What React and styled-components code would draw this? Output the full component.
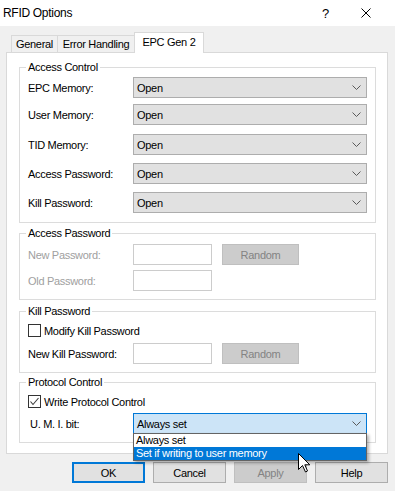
import React from "react";
import styled, { createGlobalStyle } from "styled-components";

const GlobalStyle = createGlobalStyle`
  html, body {
    margin: 0;
    padding: 0;
    background: #f0f0f0;
  }
  * {
    box-sizing: border-box;
  }
`;

const Window = styled.div`
  position: relative;
  width: 395px;
  height: 491px;
  overflow: hidden;
  background: #f0f0f0;
  font-family: "Liberation Sans", Arial, sans-serif;
  font-size: 11px;
  letter-spacing: -0.3px;
  color: #000;
  display: flex;
  flex-direction: column;
`;

const TitleBar = styled.div`
  height: 26px;
  flex-shrink: 0;
  background: #fff;
  display: flex;
  align-items: center;
  padding-left: 3px;
`;

const Title = styled.span`
  flex: 1;
  font-size: 12px;
`;

const HelpGlyph = styled.span`
  font-size: 13px;
  width: 10px;
  margin-right: 29px;
`;

const CloseBtn = styled.span`
  display: flex;
  margin-right: 24px;
`;

const TabStrip = styled.div`
  display: flex;
  align-items: flex-end;
  height: 20px;
  margin-top: 6px;
  padding-left: 11px;
`;

const Tab = styled.div`
  position: relative;
  width: ${p => p.$w}px;
  height: ${p => (p.$active ? 21 : 17)}px;
  margin-left: -1px;
  margin-bottom: ${p => (p.$active ? -1 : 0)}px;
  z-index: ${p => (p.$active ? 2 : 1)};
  background: ${p => (p.$active ? "#fff" : "#f0f0f0")};
  border: 1px solid #d9d9d9;
  border-bottom: none;
  display: flex;
  align-items: center;
  justify-content: center;
  padding-bottom: ${p => (p.$active ? 2 : 0)}px;
  &:first-child {
    margin-left: 0;
  }
`;

const Panel = styled.div`
  margin-left: 6px;
  width: 382px;
  height: 402px;
  background: #fff;
  border: 1px solid #d9d9d9;
  padding: 0 11px 0 12px;
  display: flex;
  flex-direction: column;
`;

const Group = styled.div`
  position: relative;
  height: ${p => p.$h}px;
  margin-top: ${p => p.$mt}px;
  border: 1px solid #dcdcdc;
  padding-left: 8px;
  flex-shrink: 0;
`;

const Legend = styled.span`
  position: absolute;
  top: -8px;
  left: 6px;
  line-height: 14px;
  padding: 0 2px;
  background: #fff;
`;

const Row = styled.div`
  display: flex;
  align-items: center;
  margin-top: ${p => p.$mt}px;
`;

const Label = styled.span`
  width: 105px;
  flex-shrink: 0;
  color: ${p => (p.$disabled ? "#a0a0a0" : "#000")};
`;

const Combo = styled.div`
  position: relative;
  width: 234px;
  height: 21px;
  border: 1px solid ${p => (p.$focused ? "#0078d7" : "#adadad")};
  background: ${p => (p.$focused ? "#cce4f7" : "#e1e1e1")};
  display: flex;
  align-items: center;
  justify-content: space-between;
  padding: 0 5px 0 3px;
`;

const DropList = styled.div`
  position: absolute;
  top: 19px;
  left: -1px;
  width: 234px;
  border: 1px solid #646464;
  background: #fff;
  box-shadow: 2px 2px 3px rgba(0, 0, 0, 0.3);
  z-index: 5;
`;

const DropItem = styled.div`
  height: 13px;
  line-height: 13px;
  padding-left: 2px;
  background: ${p => (p.$selected ? "#0078d7" : "#fff")};
  color: ${p => (p.$selected ? "#fff" : "#000")};
`;

const TextBox = styled.div`
  width: 79px;
  height: 21px;
  border: 1px solid #cccccc;
  background: #fff;
`;

const Button = styled.div`
  width: ${p => p.$w || 73}px;
  height: 21px;
  margin-left: ${p => p.$ml || 0}px;
  display: flex;
  align-items: center;
  justify-content: center;
  background: ${p => (p.$disabled ? "#cccccc" : "#e1e1e1")};
  border: ${p => (p.$default ? "2px solid #0078d7" : p.$disabled ? "1px solid #bfbfbf" : "1px solid #adadad")};
  color: ${p => (p.$disabled ? "#838383" : "#000")};
`;

const CheckRow = styled.label`
  display: flex;
  align-items: center;
  height: 13px;
  margin-top: ${p => p.$mt}px;
  gap: 3px;
`;

const CheckBox = styled.span`
  width: 13px;
  height: 13px;
  border: 1px solid #333;
  background: #fff;
  display: flex;
  align-items: center;
  justify-content: center;
`;

const ButtonBar = styled.div`
  display: flex;
  justify-content: flex-end;
  gap: 8px;
  margin-top: 8px;
  padding-right: 7px;
`;

const Cursor = styled.svg`
  position: absolute;
  left: 298px;
  top: 453px;
  z-index: 10;
`;

const Chevron = () => (
  <svg width="9" height="5" viewBox="0 0 9 5">
    <polyline points="0.5,0.5 4.5,4.5 8.5,0.5" fill="none" stroke="#5a5a5a" strokeWidth="1" />
  </svg>
);

const Check = () => (
  <svg width="11" height="11" viewBox="0 0 11 11">
    <polyline points="1.5,5.5 4,8.5 9.5,2" fill="none" stroke="#3c3c3c" strokeWidth="1.1" />
  </svg>
);

const SelectBox = ({ value, focused, children }) => (
  <Combo $focused={focused}>
    <span>{value}</span>
    <Chevron />
    {children}
  </Combo>
);

const accessRows = [
  { label: "EPC Memory:", mt: 9 },
  { label: "User Memory:", mt: 6 },
  { label: "TID Memory:", mt: 9 },
  { label: "Access Password:", mt: 8 },
  { label: "Kill Password:", mt: 8 }
];

export default function App() {
  return (
    <Window>
      <GlobalStyle />
      <TitleBar>
        <Title>RFID Options</Title>
        <HelpGlyph>?</HelpGlyph>
        <CloseBtn>
          <svg width="10" height="10" viewBox="0 0 10 10">
            <path d="M0.5 0.5 L9.5 9.5 M9.5 0.5 L0.5 9.5" stroke="#000" strokeWidth="1" />
          </svg>
        </CloseBtn>
      </TitleBar>

      <TabStrip>
        <Tab $w={47}>General</Tab>
        <Tab $w={78}>Error Handling</Tab>
        <Tab $w={70} $active>EPC Gen 2</Tab>
      </TabStrip>

      <Panel>
        <Group $h={156} $mt={14}>
          <Legend>Access Control</Legend>
          {accessRows.map(r => (
            <Row key={r.label} $mt={r.mt}>
              <Label>{r.label}</Label>
              <SelectBox value="Open" />
            </Row>
          ))}
        </Group>

        <Group $h={67} $mt={10}>
          <Legend>Access Password</Legend>
          <Row $mt={10}>
            <Label $disabled>New Password:</Label>
            <TextBox />
            <Button $disabled $w={77} $ml={10}>Random</Button>
          </Row>
          <Row $mt={5}>
            <Label $disabled>Old Password:</Label>
            <TextBox />
          </Row>
        </Group>

        <Group $h={62} $mt={11}>
          <Legend>Kill Password</Legend>
          <CheckRow $mt={12}>
            <CheckBox />
            Modify Kill Password
          </CheckRow>
          <Row $mt={6}>
            <Label>New Kill Password:</Label>
            <TextBox />
            <Button $disabled $w={77} $ml={10}>Random</Button>
          </Row>
        </Group>

        <Group $h={61} $mt={9}>
          <Legend>Protocol Control</Legend>
          <CheckRow $mt={12}>
            <CheckBox>
              <Check />
            </CheckBox>
            Write Protocol Control
          </CheckRow>
          <Row $mt={5}>
            <Label style={{ paddingLeft: 2 }}>U. M. I. bit:</Label>
            <SelectBox value="Always set" focused>
              <DropList>
                <DropItem>Always set</DropItem>
                <DropItem $selected>Set if writing to user memory</DropItem>
              </DropList>
            </SelectBox>
          </Row>
        </Group>
      </Panel>

      <ButtonBar>
        <Button $default>OK</Button>
        <Button>Cancel</Button>
        <Button $disabled>Apply</Button>
        <Button>Help</Button>
      </ButtonBar>

      <Cursor width="13" height="20" viewBox="0 0 13 20">
        <path d="M0.5 0.5 L0.5 16.5 L4.5 12.5 L7.5 19 L9.5 18 L6.8 11.8 L11.8 11.8 Z" fill="#fff" stroke="#000" strokeWidth="1" />
      </Cursor>
    </Window>
  );
}
